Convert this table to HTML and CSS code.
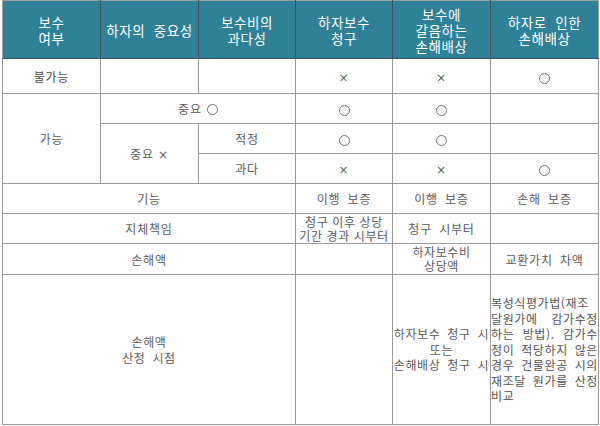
FILE: index.html
```html
<!DOCTYPE html>
<html lang="ko">
<head>
<meta charset="utf-8">
<link rel="stylesheet" href="styles.css">
</head>
<body>
<table class="grid">
  <colgroup>
    <col class="c1"><col class="c2"><col class="c3"><col class="c4"><col class="c5"><col class="c6">
  </colgroup>
  <thead>
    <tr class="r-head">
      <th>보수<br>여부</th>
      <th class="wide">하자의 중요성</th>
      <th>보수비의<br>과다성</th>
      <th>하자보수<br>청구</th>
      <th>보수에<br>갈음하는<br>손해배상</th>
      <th class="wide">하자로 인한<br>손해배상</th>
    </tr>
  </thead>
  <tbody>
    <tr class="r35">
      <td class="strong">불가능</td>
      <td></td>
      <td></td>
      <td><span class="x">×</span></td>
      <td><span class="x">×</span></td>
      <td><span class="o"></span></td>
    </tr>
    <tr class="r30">
      <td rowspan="3">가능</td>
      <td colspan="2">중요 <span class="o small"></span></td>
      <td><span class="o"></span></td>
      <td><span class="o"></span></td>
      <td></td>
    </tr>
    <tr class="r30">
      <td rowspan="2">중요 <span class="x">×</span></td>
      <td>적정</td>
      <td><span class="o"></span></td>
      <td><span class="o"></span></td>
      <td></td>
    </tr>
    <tr class="r30">
      <td>과다</td>
      <td><span class="x">×</span></td>
      <td><span class="x">×</span></td>
      <td><span class="o"></span></td>
    </tr>
    <tr class="r30">
      <td colspan="3">기능</td>
      <td class="wide">이행 보증</td>
      <td class="wide">이행 보증</td>
      <td class="wide">손해 보증</td>
    </tr>
    <tr class="r30">
      <td colspan="3" class="wide">지체책임</td>
      <td class="tight small-lh">청구 이후 상당<br>기간 경과 시부터</td>
      <td class="wide">청구 시부터</td>
      <td></td>
    </tr>
    <tr class="r31">
      <td colspan="3">손해액</td>
      <td></td>
      <td class="tight small-lh">하자보수비<br>상당액</td>
      <td class="wide">교환가치 차액</td>
    </tr>
    <tr class="r150">
      <td colspan="3" class="tight wide">손해액<br>산정 시점</td>
      <td></td>
      <td class="tight wide">하자보수 청구 시<br>또는<br>손해배상 청구 시</td>
      <td class="para">복성식평가법(재조달원가에 감가수정하는 방법). 감가수정이 적당하지 않은 경우 건물완공 시의 재조달 원가를 산정 비교</td>
    </tr>
  </tbody>
</table>
</body>
</html>
```

FILE: styles.css
```css
html, body {
  margin: 0;
  padding: 0;
  background: #ffffff;
}

body {
  font-family: "Noto Sans CJK KR", "Noto Sans", sans-serif;
}

.grid {
  margin: 0 0 0 2px;
  border-collapse: collapse;
  table-layout: fixed;
  width: 597px;
}

.c1 { width: 98px; }
.c2 { width: 98px; }
.c3 { width: 97px; }
.c4 { width: 97px; }
.c5 { width: 98px; }
.c6 { width: 108px; }

.grid th,
.grid td {
  padding: 0;
  text-align: center;
  vertical-align: middle;
  border: 1px solid #9a9a9a;
  overflow: hidden;
}

.grid th {
  background: #2f8198;
  color: #ffffff;
  font-weight: normal;
  font-size: 13.5px;
  line-height: 16px;
  letter-spacing: 0.6px;
  border-color: #3c5560;
  border-top-color: #a0a0a0;
}

.grid th:first-child { border-left-color: #a0a0a0; }
.grid th:last-child { border-right-color: #a0a0a0; }

.grid th.wide { word-spacing: 4px; }

.grid td {
  color: #5a5a5a;
  font-size: 12px;
  line-height: 15px;
  letter-spacing: 0.8px;
}

.grid td.strong { color: #4a4a4a; }

.grid td.wide { word-spacing: 3px; }
.grid td.tight { line-height: 15.5px; letter-spacing: 0.6px; }
.grid td.small-lh { line-height: 14px; }

.r-head { height: 58px; }
.r35 { height: 35px; }
.r30 { height: 30px; }
.r31 { height: 31px; }
.r150 { height: 150px; }

.grid td.para {
  text-align: justify;
  text-align-last: left;
  word-break: break-all;
  font-size: 12px;
  line-height: 15.5px;
  letter-spacing: 0.6px;
  color: #555555;
}

.o {
  display: inline-block;
  width: 9px;
  height: 9px;
  border: 1.3px solid #707070;
  border-radius: 50%;
  vertical-align: middle;
}

.o.small {
  margin-left: 1px;
  position: relative;
  top: -1px;
}

.x {
  display: inline-block;
  font-family: "DejaVu Sans", sans-serif;
  font-size: 12px;
  color: #606060;
  line-height: 12px;
}
```
